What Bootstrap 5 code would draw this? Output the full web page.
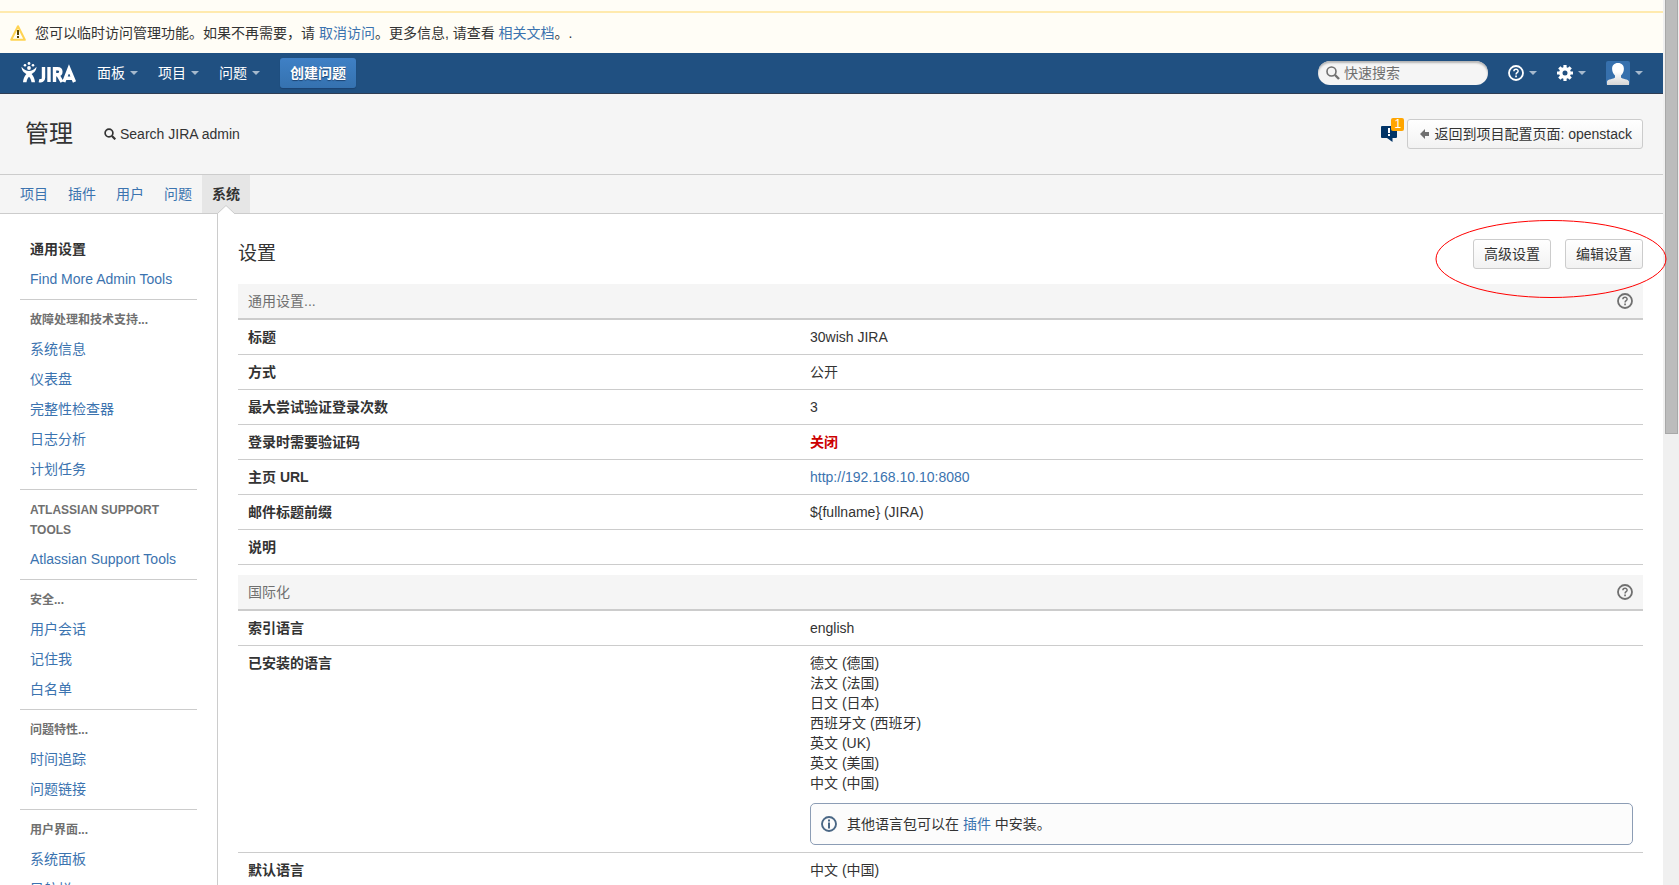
<!DOCTYPE html>
<html lang="zh-CN">
<head>
<meta charset="utf-8">
<meta name="viewport" content="width=device-width, initial-scale=1">
<title>设置 - 30wish JIRA</title>
<link href="https://cdn.jsdelivr.net/npm/bootstrap@5.3.0/dist/css/bootstrap.min.css" rel="stylesheet">
<style>
  body { font: 14px/20px "Liberation Sans", "Noto Sans CJK SC", sans-serif; color: #333; background: #fff; }
  a { color: #3b73af; text-decoration: none; }
  a:hover { text-decoration: underline; }
  svg { flex: none; display: block; }

  .page-main { min-width: 0; }
  .page-main > * { flex-shrink: 0; }

  .notice { background: #fffdf6; }
  .notice-top { height: 13px; border-bottom: 2px solid #ffeaae; }
  .notice-text { height: 40px; padding: 0 10px; gap: 9px; }

  .topbar { height: 41px; background: #205081; border-bottom: 1px solid #2e3d54; padding: 0 20px; }
  .topbar .menu-btn { background: none; border: 0; padding: 0; color: #fff; gap: 5px; }
  .topbar .menu-btn::after { content: ""; border: 4px solid transparent; border-top-color: #a6b9cd; border-bottom: 0; }
  .main-menus { gap: 20px; }
  .tool-menus { gap: 20px; }
  .btn-create { height: 30px; padding: 0 10px; border: 0; border-radius: 3px; color: #fff; font-size: 14px; line-height: 20px; font-weight: 700; background: linear-gradient(#3f80c5, #3572b0); box-shadow: 0 1px 1px #1b4270; text-shadow: 0 1px 1px #1b4270; }
  .btn-create:hover { color: #fff; background: #3572b0; }
  .quick-search { width: 170px; height: 24px; border-radius: 12px; padding: 0 8px; gap: 4px; background: #f5f5f5; box-shadow: inset 0 2px 2px #b5b5b5; }
  .quick-search input { border: 0; background: none; outline: 0; padding: 0; width: 100%; line-height: 20px; }
  .quick-search input::placeholder { color: #707070; opacity: 1; }

  .admin-head { height: 80px; background: #f5f5f5; padding: 0 20px 0 25px; gap: 31px; }
  .admin-head h1 { font-size: 24px; line-height: 30px; font-weight: 400; color: #333; margin: 0; }
  .btn-aui { height: 30px; padding: 0 10px; border: 1px solid #ccc; border-radius: 3px; color: #333; font-size: 14px; line-height: 20px; background: linear-gradient(#fff, #f2f2f2); }
  .btn-aui:hover { border-color: #999; background: #f2f2f2; }
  .feedback { background: none; border: 0; padding: 0; width: 26px; height: 32px; }
  .feedback-count { position: absolute; top: 0; right: 3px; width: 13px; height: 13px; border-radius: 2px; background: #ffa500; color: #fff; font-size: 12px; line-height: 12px; text-align: center; }

  .admin-tabs { height: 40px; background: #f5f5f5; border-top: 1px solid #ccc; border-bottom: 1px solid #ccc; padding-left: 10px; }
  .admin-tabs a { padding: 9px 10px; }
  .admin-tabs a.active { background: #e6e6e6; color: #333; font-weight: 700; position: relative; }
  .tab-arrow { position: absolute; left: 15px; bottom: -1px; }

  .side { width: 218px; flex: none; padding: 20px 20px 0; border-right: 1px solid #ccc; }
  .side section { padding-bottom: 5px; margin-bottom: 10px; border-bottom: 1px solid #ccc; }
  .side h2 { font-size: 12px; line-height: 20px; font-weight: 700; color: #707070; margin: 0 0 4px; padding: 0 10px; text-transform: uppercase; }
  .side a { display: block; padding: 5px 10px; }
  .side a.current { color: #333; font-weight: 700; }

  .panel { padding: 25px 20px 0; min-width: 0; }
  .panel-head { margin-bottom: 15px; }
  .panel-head h2 { font-size: 19px; line-height: 30px; font-weight: 400; color: #333; margin: 0; }
  .panel-actions { gap: 14px; }
  .circle-mark { position: absolute; right: -24px; top: -20px; pointer-events: none; }

  .settings { width: 100%; table-layout: fixed; margin-bottom: 10px; }
  .settings th, .settings td { padding: 7px 10px; border-bottom: 1px solid #ccc; vertical-align: top; }
  .settings col.key { width: 40%; }
  .settings thead th { background: #f5f5f5; border-bottom: 2px solid #ccc; font-weight: 400; color: #707070; }
  .settings tbody th { font-weight: 700; }
  .off { color: #c00; }
  .note { border: 1px solid #8c9db5; border-radius: 5px; background: #fcfcfc; padding: 10px; gap: 10px; margin-top: 10px; }

  .scroll-track { width: 16px; flex: none; background: #f0f0f0; padding: 0 1px 0 2px; }
  .scroll-thumb { height: 49%; background: #bcbcbc; border: 1px solid #a8a8a8; border-top: 0; }
</style>
</head>
<body class="vh-100 overflow-hidden d-flex">
<svg width="0" height="0" class="position-absolute" aria-hidden="true">
  <symbol id="help" viewBox="0 0 16 16">
    <circle cx="8" cy="8" r="7" fill="none" stroke="currentColor" stroke-width="1.8"/>
    <path d="M5.9 6.3C5.9 3.6 10.2 3.7 10.1 6.2C10 7.7 8.1 7.6 8.1 9.4" fill="none" stroke="currentColor" stroke-width="1.5"/>
    <path d="M7.2 10.6h1.7v1.7H7.2z" fill="currentColor"/>
  </symbol>
</svg>

<div class="page-main flex-grow-1 d-flex flex-column">
  <div class="notice">
    <div class="notice-top"></div>
    <div class="notice-text d-flex align-items-center">
      <svg width="16" height="16" viewBox="0 0 16 16"><path d="M8 1.2L14.8 14.8H1.2z" fill="#fffdf6" stroke="#ffd351" stroke-width="2" stroke-linejoin="round"/><path d="M7 5h2v5H7zM7 11h2v2H7z" fill="#594300"/></svg>
      <div>您可以临时访问管理功能。如果不再需要，请 <a href="#">取消访问</a>。更多信息, 请查看 <a href="#">相关文档</a>。.</div>
    </div>
  </div>

  <header class="topbar d-flex align-items-center">
    <a href="#" class="me-3" aria-label="JIRA">
      <svg width="61" height="24" viewBox="-1 0 61 24" fill="#fff">
        <circle cx="4" cy="4.300" r="1.300"/><circle cx="8" cy="2.500" r="1.400"/><circle cx="12" cy="4.300" r="1.300"/>
        <path d="M0.500 5.700C3 9 5.400 9.900 8 9.900S13 9 15.500 5.700C15.300 10 12.900 11.500 10.600 12.900C12.600 15 13.800 18 14 21.300H10.500C10.100 18.600 9.300 17 8 15.800C6.700 17 5.900 18.600 5.500 21.300H2C2.200 18 3.400 15 5.400 12.900C3.100 11.500 0.700 10 0.500 5.700z"/>
        <circle cx="8" cy="7" r="1.900"/>
        <g fill="none" stroke="#fff" stroke-width="3.400"><path d="M22.500 6V16.500C22.500 19.500 20.600 20.200 18 19.600M28 6V21M33.500 21V7.700H36.500C41 7.700 41 13.700 36.500 13.700H34M37 14L41 21M42.800 21L48 7.700L53.500 21M44.500 17.200H52"/></g>
      </svg>
    </a>
    <nav class="d-flex align-items-center main-menus">
      <button type="button" class="menu-btn d-flex align-items-center">面板</button>
      <button type="button" class="menu-btn d-flex align-items-center">项目</button>
      <button type="button" class="menu-btn d-flex align-items-center">问题</button>
      <button type="button" class="btn btn-create">创建问题</button>
    </nav>
    <div class="ms-auto d-flex align-items-center tool-menus">
      <label class="quick-search d-flex align-items-center">
        <svg width="14" height="14" viewBox="0 0 14 14" fill="none" stroke="#707070"><circle cx="5.500" cy="5.500" r="4.500" stroke-width="1.600"/><path d="M9 9l4 4" stroke-width="2.400"/></svg>
        <input type="text" placeholder="快速搜索" aria-label="快速搜索">
      </label>
      <button type="button" class="menu-btn d-flex align-items-center" aria-label="帮助"><svg width="16" height="16"><use href="#help"/></svg></button>
      <button type="button" class="menu-btn d-flex align-items-center" aria-label="管理">
        <svg width="16" height="16" viewBox="0 0 16 16"><circle cx="8" cy="8" r="4.200" fill="none" stroke="#fff" stroke-width="3.400"/><path d="M8 0v3M8 13v3M0 8h3M13 8h3M2.300 2.300l2.200 2.200M11.500 11.500l2.200 2.200M2.300 13.700l2.200-2.200M11.500 4.500l2.200-2.200" stroke="#fff" stroke-width="3.200"/></svg>
      </button>
      <button type="button" class="menu-btn d-flex align-items-center" aria-label="用户">
        <svg width="24" height="24" viewBox="0 0 24 24"><defs><linearGradient id="person" x2="0" y2="1"><stop offset=".4" stop-color="#fff"/><stop offset="1" stop-color="#d6d6d6"/></linearGradient></defs><rect width="24" height="24" rx="2" fill="#3670ad"/><path d="M12 2C15.800 2 18 4.500 17.900 8C17.800 11 16.600 13 15 14.500V16.500C16 18 22.500 18 23 20.500V24H1V20.500C1.500 18 8 18 9 16.500V14.500C7.400 13 6.200 11 6.100 8C6 4.500 8.200 2 12 2z" fill="url(#person)"/></svg>
      </button>
    </div>
  </header>

  <div class="admin-head d-flex align-items-center">
    <h1>管理</h1>
    <a href="#" class="d-flex align-items-center gap-1 text-reset">
      <svg width="12" height="12" viewBox="0 0 12 12" fill="none" stroke="#333"><circle cx="5" cy="5" r="3.900" stroke-width="1.700"/><path d="M8 8l3.300 3.300" stroke-width="2.200"/></svg>
      Search JIRA admin
    </a>
    <div class="ms-auto d-flex align-items-center">
      <button type="button" class="feedback position-relative" aria-label="反馈 1">
        <svg width="16" height="16" viewBox="0 0 16 16"><path d="M1 0h14a1 1 0 0 1 1 1v10a1 1 0 0 1-1 1h-3.500v4L6 12H1a1 1 0 0 1-1-1V1a1 1 0 0 1 1-1z" fill="#036"/><path d="M7 2h2v5H7zM7 8h2v2H7z" fill="#fff"/></svg>
        <span class="feedback-count">1</span>
      </button>
      <button type="button" class="btn btn-aui d-flex align-items-center gap-1">
        <svg width="12" height="10" viewBox="0 0 12 10"><path d="M2 5L7 0V3H11V7H7V10z" fill="#707070"/></svg>返回到项目配置页面: openstack
      </button>
    </div>
  </div>

  <nav class="admin-tabs d-flex">
    <a href="#">项目</a><a href="#">插件</a><a href="#">用户</a><a href="#">问题</a>
    <a href="#" class="active" aria-current="page">系统<svg class="tab-arrow" width="18" height="9" viewBox="0 0 18 9"><path d="M0 9L9 0.500L18 9" fill="#fff" stroke="#ccc"/></svg></a>
  </nav>

  <div class="d-flex">
    <aside class="side">
      <section><a href="#" class="current">通用设置</a><a href="#">Find More Admin Tools</a></section>
      <section><h2>故障处理和技术支持...</h2><a href="#">系统信息</a><a href="#">仪表盘</a><a href="#">完整性检查器</a><a href="#">日志分析</a><a href="#">计划任务</a></section>
      <section><h2>Atlassian Support Tools</h2><a href="#">Atlassian Support Tools</a></section>
      <section><h2>安全...</h2><a href="#">用户会话</a><a href="#">记住我</a><a href="#">白名单</a></section>
      <section><h2>问题特性...</h2><a href="#">时间追踪</a><a href="#">问题链接</a></section>
      <section><h2>用户界面...</h2><a href="#">系统面板</a><a href="#">导航栏</a></section>
    </aside>

    <main class="panel flex-grow-1">
      <div class="panel-head position-relative d-flex justify-content-between">
        <h2>设置</h2>
        <div class="panel-actions d-flex">
          <button type="button" class="btn btn-aui">高级设置</button>
          <button type="button" class="btn btn-aui">编辑设置</button>
        </div>
        <svg class="circle-mark" width="232" height="80" viewBox="0 0 232 80"><ellipse cx="116" cy="40" rx="115" ry="38.500" fill="none" stroke="#f00"/></svg>
      </div>

      <table class="settings">
        <colgroup><col class="key"><col></colgroup>
        <thead><tr><th colspan="2"><div class="d-flex justify-content-between align-items-center">通用设置...<a href="#" class="text-reset" aria-label="帮助"><svg width="16" height="16"><use href="#help"/></svg></a></div></th></tr></thead>
        <tbody>
          <tr><th scope="row">标题</th><td>30wish JIRA</td></tr>
          <tr><th scope="row">方式</th><td>公开</td></tr>
          <tr><th scope="row">最大尝试验证登录次数</th><td>3</td></tr>
          <tr><th scope="row">登录时需要验证码</th><td><strong class="off">关闭</strong></td></tr>
          <tr><th scope="row">主页 URL</th><td><a href="#">http://192.168.10.10:8080</a></td></tr>
          <tr><th scope="row">邮件标题前缀</th><td>${fullname} (JIRA)</td></tr>
          <tr><th scope="row">说明</th><td></td></tr>
        </tbody>
      </table>

      <table class="settings">
        <colgroup><col class="key"><col></colgroup>
        <thead><tr><th colspan="2"><div class="d-flex justify-content-between align-items-center">国际化<a href="#" class="text-reset" aria-label="帮助"><svg width="16" height="16"><use href="#help"/></svg></a></div></th></tr></thead>
        <tbody>
          <tr><th scope="row">索引语言</th><td>english</td></tr>
          <tr><th scope="row">已安装的语言</th><td>
            德文 (德国)<br>法文 (法国)<br>日文 (日本)<br>西班牙文 (西班牙)<br>英文 (UK)<br>英文 (美国)<br>中文 (中国)
            <div class="note d-flex align-items-center">
              <svg width="16" height="16" viewBox="0 0 16 16"><circle cx="8" cy="8" r="7" fill="none" stroke="#4a6785" stroke-width="1.900"/><path d="M7 3.500h2v2H7zM7 6.500h2v6H7z" fill="#4a6785"/></svg>
              <div>其他语言包可以在 <a href="#">插件</a> 中安装。</div>
            </div>
          </td></tr>
          <tr><th scope="row">默认语言</th><td>中文 (中国)</td></tr>
        </tbody>
      </table>
    </main>
  </div>
</div>
<div class="scroll-track" aria-hidden="true"><div class="scroll-thumb"></div></div>
<script src="https://cdn.jsdelivr.net/npm/bootstrap@5.3.0/dist/js/bootstrap.bundle.min.js"></script>
</body>
</html>
